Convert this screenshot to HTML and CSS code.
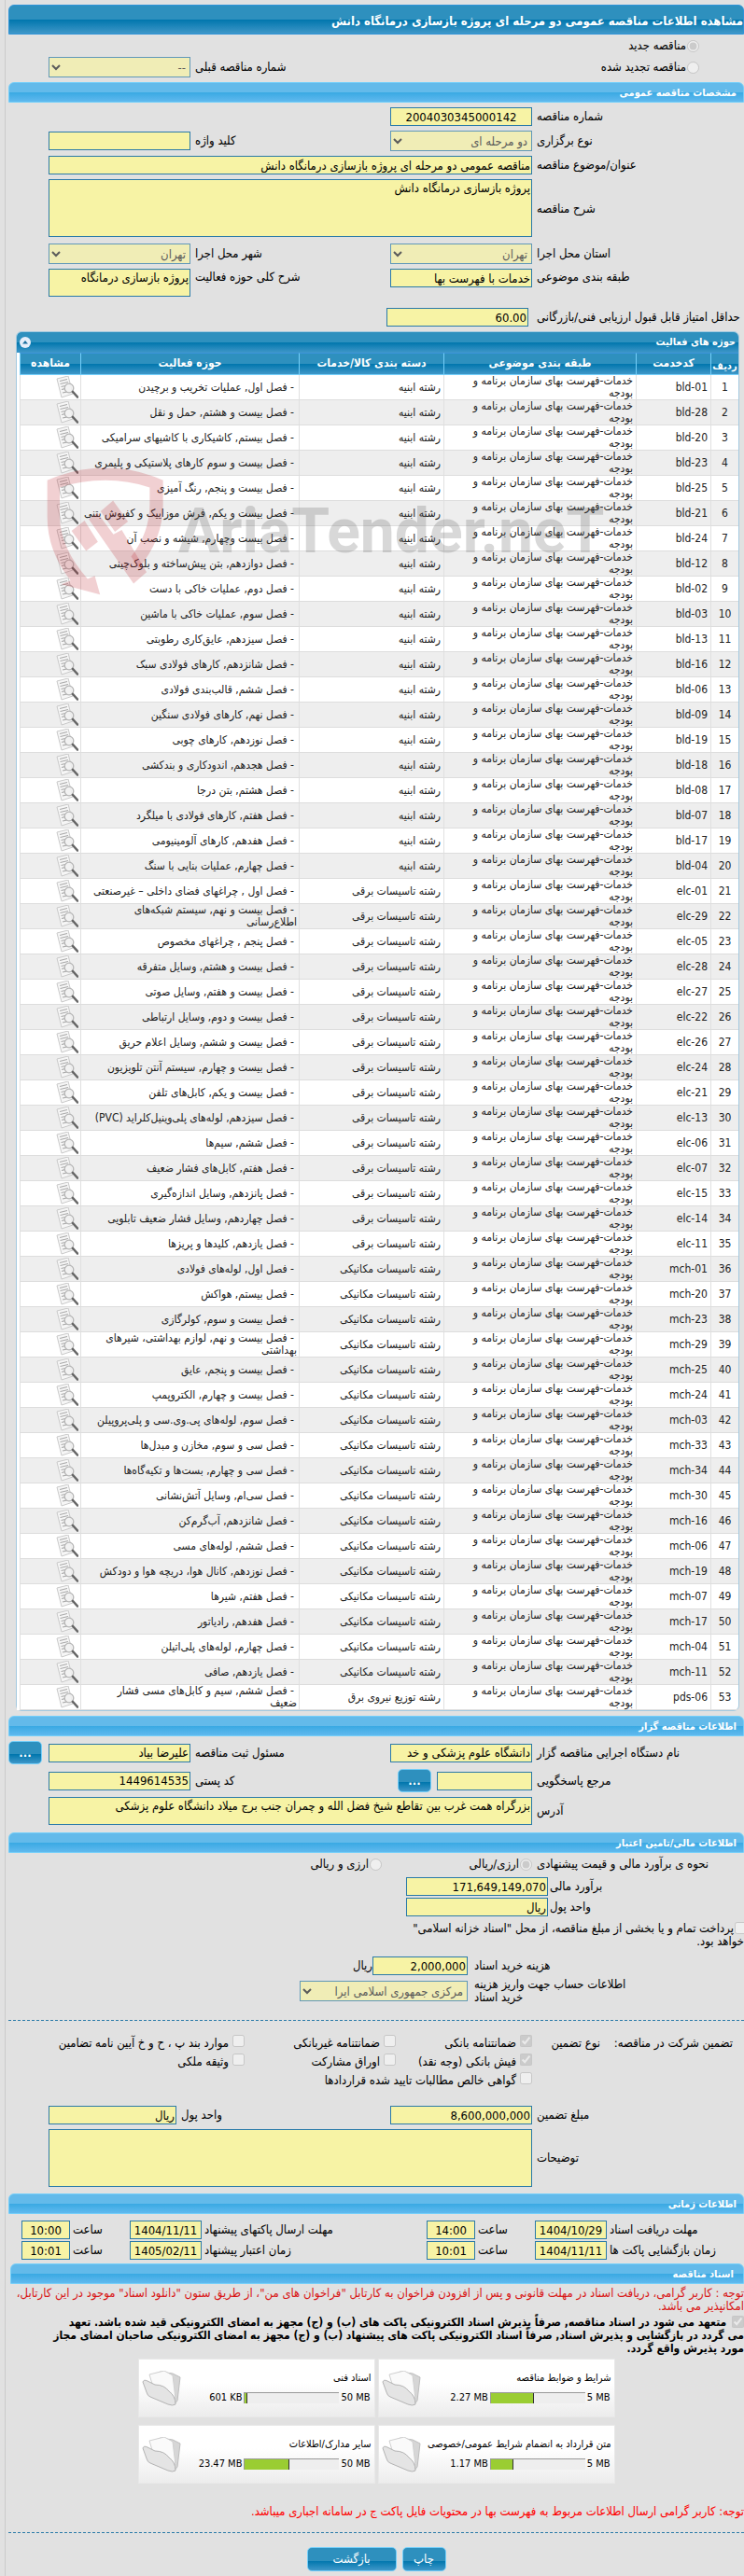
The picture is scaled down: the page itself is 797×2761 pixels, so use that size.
FILE: index.html
```
<!DOCTYPE html>
<html lang="fa" dir="rtl">
<head>
  <meta charset="UTF-8">
  <meta name="viewport" content="width=device-width, initial-scale=1">
  <title>مشاهده اطلاعات مناقصه عمومی</title>
  <link rel="stylesheet" href="styles.css">
</head>
<body>

<svg width="0" height="0" class="sprite" aria-hidden="true">
  <symbol id="icon-view" viewBox="0 0 24 24">
    <path d="M1 3 L13 0 L18 19 L6 23 Z" fill="#f6f6f6" stroke="#c9c9c9" stroke-width="1"/>
    <path d="M4 5.500 L12 3.500 M4.500 8.500 L13 6.500 M5.500 11.500 L10 10.500 M6 14.500 L9.500 13.700 M7 18 L12 16.800" stroke="#a9a9a9" stroke-width="1.200" fill="none"/>
    <circle cx="14" cy="13" r="4.800" fill="#f1f1f1" fill-opacity=".85" stroke="#b5b5b5" stroke-width="1.300"/>
    <path d="M18 17 L23 22.500" stroke="#666" stroke-width="2.600" stroke-linecap="round"/>
  </symbol>
  <symbol id="icon-folder" viewBox="0 0 42 38">
    <path d="M10 5 L20 1 L33 3 L41 7 L38 32 L34 37 Z" fill="#d6d6d6" stroke="#bdbdbd"/>
    <path d="M8 4 L24 0 L33 5 L36 30 L14 24 Z" fill="#fafafa" stroke="#cfcfcf"/>
    <path d="M1 12 Q2 9 6 11 L14 15 Q24 15 29 22 Q36 27 36 36 Q33 38 28 36 L9 28 Q6 27 5 23 Z" fill="#e4e4e4" stroke="#b3b3b3"/>
  </symbol>
</svg>

<div class="page">
  <h1 class="title-bar">مشاهده اطلاعات مناقصه عمومی دو مرحله ای پروژه بازسازی درمانگاه دانش</h1>

  <div class="form form-type">
    <div class="wide radio-line">
      <input type="radio" id="newTender" name="tenderKind" checked disabled>
      <label for="newTender">مناقصه جدید</label>
    </div>
    <div class="radio-line span2">
      <input type="radio" id="renewTender" name="tenderKind" disabled>
      <label for="renewTender">مناقصه تجدید شده</label>
    </div>
    <label for="prevNo" class="lbl">شماره مناقصه قبلی</label>
    <select id="prevNo" disabled><option>--</option></select>
  </div>

  <h2 class="section-bar">مشخصات مناقصه عمومی</h2>
  <div class="form form-main">
    <label for="tenderNo" class="lbl first">شماره مناقصه</label>
    <input type="text" id="tenderNo" class="center" value="2004030345000142" readonly>

    <label for="holdType" class="lbl first">نوع برگزاری</label>
    <select id="holdType" disabled><option>دو مرحله ای</option></select>
    <label for="keyword" class="lbl">کلید واژه</label>
    <input type="text" id="keyword" readonly>

    <label for="subject" class="lbl first">عنوان/موضوع مناقصه</label>
    <input type="text" id="subject" class="span3" value="مناقصه عمومی دو مرحله ای پروژه بازسازی درمانگاه دانش" readonly>

    <label for="desc" class="lbl first">شرح مناقصه</label>
    <textarea id="desc" class="span3 tall" readonly>پروژه بازسازی درمانگاه دانش</textarea>

    <label for="province" class="lbl first">استان محل اجرا</label>
    <select id="province" disabled><option>تهران</option></select>
    <label for="city" class="lbl">شهر محل اجرا</label>
    <select id="city" disabled><option>تهران</option></select>

    <label for="category" class="lbl first top">طبقه بندی موضوعی</label>
    <input type="text" id="category" class="top" value="خدمات با فهرست بها" readonly>
    <label for="field" class="lbl top">شرح کلی حوزه فعالیت</label>
    <textarea id="field" class="short" readonly>پروژه بازسازی درمانگاه</textarea>
  </div>
  <div class="line score">
    <label for="minScore">حداقل امتیاز قابل قبول ارزیابی فنی/بازرگانی</label>
    <input type="text" id="minScore" class="w-field" value="60.00" readonly>
  </div>

  <div class="panel">
    <div class="panel-title">
      <span>حوزه های فعالیت</span>
      <button type="button" class="collapse" aria-label="بستن">
        <svg viewBox="0 0 12 12"><path d="M3 7.500 L6 4 L9 7.500 Z" fill="#1b6f9e"/></svg>
      </button>
    </div>
    <table class="grid">
      <colgroup>
        <col class="c-no"><col class="c-code"><col class="c-class"><col class="c-group"><col class="c-area"><col class="c-view">
      </colgroup>
      <thead>
        <tr>
          <th class="low">ردیف</th><th>کدخدمت</th><th>طبقه بندی موضوعی</th><th>دسته بندی کالا/خدمات</th><th>حوزه فعالیت</th><th>مشاهده</th>
        </tr>
      </thead>
      <tbody id="rows"></tbody>
    </table>
    <div class="watermark" aria-hidden="true">
      <span>AriaTender.neT</span>
      <svg viewBox="25 25 385 420">
        <path d="M30 72 Q120 32 217 32 Q315 32 403 72 V150 Q403 260 325 355 L300 318 Q360 240 360 150 V95 Q290 72 217 72 Q140 72 70 95 V190 Q72 290 160 390 L183 380 L200 440 L75 407 L105 395 Q30 300 30 190 Z"/>
        <path d="M108 235 L150 202 L193 270 L155 300 Z M202 172 L242 137 L290 205 L248 238 Z M163 197 L192 177 L243 246 L270 232 L350 368 L308 405 Z"/>
      </svg>
    </div>
  </div>

  <h2 class="section-bar">اطلاعات مناقصه گزار</h2>
  <div class="form form-owner">
    <label for="org" class="lbl first">نام دستگاه اجرایی مناقصه گزار</label>
    <input type="text" id="org" value="دانشگاه علوم پزشکی و خد" readonly>
    <label for="registrar" class="lbl">مسئول ثبت مناقصه</label>
    <input type="text" id="registrar" value="علیرضا بیاد" readonly>
    <button type="button" class="btn dots">...</button>

    <label for="contact" class="lbl first">مرجع پاسخگویی</label>
    <div class="with-btn">
      <input type="text" id="contact" readonly>
      <button type="button" class="btn dots">...</button>
    </div>
    <label for="postal" class="lbl">کد پستی</label>
    <input type="text" id="postal" value="1449614535" readonly>

    <label for="address" class="lbl first">آدرس</label>
    <textarea id="address" class="span3 short" readonly>بزرگراه همت غرب بین تقاطع شیخ فضل الله و چمران جنب برج میلاد دانشگاه علوم پزشکی</textarea>
  </div>

  <h2 class="section-bar">اطلاعات مالی/تامین اعتبار</h2>
  <div class="line estimate-kind">
    <span class="kind-label">نحوه ی برآورد مالی و قیمت پیشنهادی</span>
    <span class="radio-line first-kind">
      <input type="radio" id="rial" name="currencyKind" checked disabled>
      <label for="rial">ارزی/ریالی</label>
    </span>
    <span class="radio-line">
      <input type="radio" id="both" name="currencyKind" disabled>
      <label for="both">ارزی و ریالی</label>
    </span>
  </div>
  <div class="line estimate">
    <label for="estimate">برآورد مالی</label>
    <input type="text" id="estimate" class="w-field" value="171,649,149,070" readonly>
  </div>
  <div class="line estimate">
    <label for="unit">واحد پول</label>
    <input type="text" id="unit" class="w-field" value="ریال" readonly>
  </div>
  <div class="treasury">
    <input type="checkbox" id="treasury" disabled><label for="treasury">پرداخت تمام و یا بخشی از مبلغ مناقصه، از محل "اسناد خزانه اسلامی" خواهد بود.</label>
  </div>
  <div class="line cost">
    <label for="cost">هزینه خرید اسناد</label>
    <input type="text" id="cost" value="2,000,000" readonly>
    <span>ریال</span>
  </div>
  <div class="line cost account">
    <label for="account">اطلاعات حساب جهت واریز هزینه خرید اسناد</label>
    <select id="account" disabled><option>مرکزی جمهوری اسلامی ایرا</option></select>
  </div>

  <hr>
  <div class="guarantee">
    <span>تضمین شرکت در مناقصه:</span>
    <span>نوع تضمین</span>
    <div class="options">
      <label><input type="checkbox" checked disabled>ضمانتنامه بانکی</label>
      <label><input type="checkbox" disabled>ضمانتنامه غیربانکی</label>
      <label><input type="checkbox" disabled>موارد بند پ ، ح و خ آیین نامه تضامین</label>
      <label><input type="checkbox" checked disabled>فیش بانکی (وجه نقد)</label>
      <label><input type="checkbox" disabled>اوراق مشارکت</label>
      <label><input type="checkbox" disabled>وثیقه ملکی</label>
      <label class="all"><input type="checkbox" disabled>گواهی خالص مطالبات تایید شده قراردادها</label>
    </div>
  </div>
  <div class="form form-amount">
    <label for="amount" class="lbl first">مبلغ تضمین</label>
    <input type="text" id="amount" value="8,600,000,000" readonly>
    <label for="unit2" class="lbl">واحد پول</label>
    <input type="text" id="unit2" value="ریال" readonly>
    <label for="notes" class="lbl first">توضیحات</label>
    <textarea id="notes" class="span3 tall" readonly></textarea>
  </div>

  <h2 class="section-bar">اطلاعات زمانی</h2>
  <div class="times">
    <label for="d1">مهلت دریافت اسناد</label>
    <input type="text" id="d1" value="1404/10/29" readonly>
    <label for="t1">ساعت</label>
    <input type="text" id="t1" value="14:00" readonly>
    <label for="d2">مهلت ارسال پاکتهای پیشنهاد</label>
    <input type="text" id="d2" value="1404/11/11" readonly>
    <label for="t2">ساعت</label>
    <input type="text" id="t2" value="10:00" readonly>
    <label for="d3" class="first">زمان بازگشایی پاکت ها</label>
    <input type="text" id="d3" value="1404/11/11" readonly>
    <label for="t3">ساعت</label>
    <input type="text" id="t3" value="10:01" readonly>
    <label for="d4">زمان اعتبار پیشنهاد</label>
    <input type="text" id="d4" value="1405/02/11" readonly>
    <label for="t4">ساعت</label>
    <input type="text" id="t4" value="10:01" readonly>
  </div>

  <h2 class="section-bar docs-bar">اسناد مناقصه</h2>
  <p class="notice">توجه : کاربر گرامی، دریافت اسناد در مهلت قانونی و پس از افزودن فراخوان به کارتابل "فراخوان های من"، از طریق ستون "دانلود اسناد" موجود در این کارتابل، امکانپذیر می باشد.</p>
  <div class="commit">
    <input type="checkbox" id="commit" checked disabled>
    <label for="commit">متعهد می شود در اسناد مناقصه, صرفاً پذیرش اسناد الکترونیکی پاکت های (ب) و (ج) مجهز به امضای الکترونیکی قید شده باشد. تعهد<br>می گردد در بازگشایی و پذیرش اسناد, صرفاً اسناد الکترونیکی پاکت های پیشنهاد (ب) و (ج) مجهز به امضای الکترونیکی صاحبان امضای مجاز<br>مورد پذیرش واقع گردد.</label>
  </div>

  <div class="docs">
    <div class="doc">
      <div class="doc-info">
        <div class="doc-name">شرایط و ضوابط مناقصه</div>
        <div class="usage"><span>2.27 MB</span><div class="bar"><div style="width:46%"></div></div><span>5 MB</span></div>
      </div>
      <svg class="folder"><use href="#icon-folder"/></svg>
    </div>
    <div class="doc">
      <div class="doc-info">
        <div class="doc-name">اسناد فنی</div>
        <div class="usage"><span>601 KB</span><div class="bar"><div style="width:3%"></div></div><span>50 MB</span></div>
      </div>
      <svg class="folder"><use href="#icon-folder"/></svg>
    </div>
    <div class="doc">
      <div class="doc-info">
        <div class="doc-name">متن قرارداد به انضمام شرایط عمومی/خصوصی</div>
        <div class="usage"><span>1.17 MB</span><div class="bar"><div style="width:24%"></div></div><span>5 MB</span></div>
      </div>
      <svg class="folder"><use href="#icon-folder"/></svg>
    </div>
    <div class="doc">
      <div class="doc-info">
        <div class="doc-name">سایر مدارک/اطلاعات</div>
        <div class="usage"><span>23.47 MB</span><div class="bar"><div style="width:47%"></div></div><span>50 MB</span></div>
      </div>
      <svg class="folder"><use href="#icon-folder"/></svg>
    </div>
  </div>

  <p class="notice last">توجه: کاربر گرامی ارسال اطلاعات مربوط به فهرست بها در محتویات فایل پاکت ج در سامانه اجباری میباشد.</p>
  <hr>
  <div class="actions">
    <button type="button" class="btn print">چاپ</button>
    <button type="button" class="btn back">بازگشت</button>
  </div>
</div>

<script src="script.js"></script>
</body>
</html>
```

FILE: styles.css
```
* {
  box-sizing: border-box;
}

body {
  margin: 0;
  background: #e1e1e1;
  color: #000;
  font: 13px/14px "DejaVu Sans Condensed", "DejaVu Sans", sans-serif;
}

.sprite {
  position: absolute;
}

.page {
  margin-left: 5px;
  border-left: 1px solid #cacaca;
  padding: 5px 0 5px 3px;
  overflow: hidden;
}

/* bars */
.title-bar {
  margin: 0;
  height: 32px;
  border: 1px solid #2f93d8;
  border-radius: 6px 6px 0 0;
  background: linear-gradient(#2e90be 50%, #0076ad 50%, #3f97c8);
  color: #fff;
  font-size: 13px;
  line-height: 33px;
}

.section-bar {
  margin: 0;
  height: 22px;
  padding-right: 7px;
  border: 1px solid #74cffa;
  border-radius: 6px 6px 0 0;
  background: linear-gradient(#63baea 50%, #39a9e3 50%, #60b9ee);
  color: #fff;
  font-size: 11px;
  line-height: 21px;
}

/* fields */
input[type="text"],
textarea,
select {
  display: block;
  margin: 0;
  padding: 0 1px;
  border: 1px solid #2a7aa8;
  border-radius: 0;
  background: #f7f3a5;
  color: #000;
  font: inherit;
  outline: none;
}

input[type="text"] {
  height: 20px;
  width: 100%;
}

select {
  height: 22px;
  width: 100%;
  padding: 0;
}

select:disabled {
  color: #222;
  opacity: .7;
}

textarea {
  width: 100%;
  padding: 2px 1px;
  resize: none;
  overflow: hidden;
}

.tall {
  height: 62px;
}

.short {
  height: 30px;
}

input.center {
  text-align: center;
}

input[type="radio"],
input[type="checkbox"] {
  width: 13px;
  height: 13px;
  margin: 0;
  flex: none;
}

.form {
  display: grid;
  grid-template-columns: 227px 152px 1fr 152px 43px;
  row-gap: 5px;
  align-items: center;
}

.lbl {
  padding-left: 5px;
  text-align: left;
}

.first {
  grid-column: 1;
}

.span2 {
  grid-column: span 2;
}

.span3 {
  grid-column: 2 / span 3;
}

.wide {
  grid-column: 1 / -1;
}

.top {
  align-self: start;
}

.lbl.top {
  line-height: 18px;
}

.radio-line {
  display: flex;
  align-items: center;
  gap: 1px;
}

.form-type {
  padding: 4px 0 5px;
  row-gap: 4px;
}

.form-type .radio-line {
  padding-right: 48px;
}

.form-type .wide {
  height: 16px;
}

.form-main {
  padding-top: 5px;
}

#desc {
  margin-bottom: 2px;
}

.line {
  display: flex;
  align-items: center;
}

input.w-field {
  width: 152px;
}

.score {
  padding: 12px 0 5px;
}

.score label {
  width: 231px;
  padding-left: 9px;
  text-align: left;
  white-space: nowrap;
}

/* activity table */
.panel {
  position: relative;
  margin: 0 5px 5px 8px;
  border: 1px solid #a3c9df;
  border-radius: 6px;
  background: #fff;
}

.panel-title {
  display: flex;
  justify-content: space-between;
  align-items: center;
  height: 22px;
  padding: 0 3px;
  border-radius: 5px 5px 0 0;
  background: linear-gradient(#2e90be 50%, #0076ad 50%, #3f97c8);
  color: #fff;
  font-size: 11px;
  font-weight: bold;
}

.collapse {
  width: 12px;
  height: 12px;
  padding: 0;
  border: 0;
  border-radius: 50%;
  background: #e6eefa;
}

.collapse svg {
  display: block;
}

.grid {
  width: 100%;
  border-collapse: separate;
  border-spacing: 0;
  table-layout: fixed;
  border-left: 3px solid #fff;
  color: #222;
  font-size: 12px;
  line-height: 13px;
}

.c-no { width: 30px; }
.c-code { width: 80px; }
.c-class { width: 206px; }
.c-group { width: 155px; }
.c-view { width: 65px; }

.grid th {
  height: 24px;
  padding: 0 0 2px;
  border-left: 1px solid #74cffa;
  border-bottom: 1px solid #74cffa;
  border-top: 1px solid #3b94d9;
  background: linear-gradient(#2e90be 50%, #0076ad 50%, #3f97c8);
  color: #fff;
  white-space: nowrap;
}

.grid th.low {
  padding: 4px 0 0;
  font-size: 11px;
}

.grid td {
  height: 27px;
  padding: 0 3px;
  border-left: 1px solid #e0e0e0;
  border-bottom: 1px solid #ddd;
  text-align: right;
}

.grid tbody tr:nth-child(even) {
  background: #eee;
}

.grid td:first-child {
  padding: 0;
  text-align: center;
}

.grid td.area {
  padding: 0 2px;
  text-indent: 3px;
}

.grid td.view {
  padding: 0 2px;
}

.view button {
  display: block;
  width: 24px;
  height: 24px;
  padding: 0;
  border: 0;
  background: none;
}

.view svg {
  display: block;
  width: 24px;
  height: 24px;
}

.watermark {
  position: absolute;
  top: 143px;
  left: 31px;
  display: flex;
  align-items: center;
  gap: 14px;
  color: rgba(90, 90, 90, .24);
  font: bold 66px "Roboto", sans-serif;
  pointer-events: none;
}

.watermark svg {
  width: 128px;
  height: 140px;
  fill: rgba(190, 40, 50, .22);
}

/* buttons */
.btn {
  padding: 0;
  border: 1px solid #74cffa;
  border-radius: 5px;
  background: linear-gradient(#2e90be 58%, #0076ad 58%, #3f97c8);
  color: #fff;
  font: inherit;
}

.dots {
  width: 36px;
  height: 25px;
  font-weight: bold;
}

.form-owner {
  padding: 5px 0 8px;
}

.form-owner > .dots {
  justify-self: end;
}

.with-btn {
  display: flex;
  align-items: center;
  gap: 6px;
}

.with-btn input[type="text"] {
  width: 102px;
}

/* finance */
.estimate-kind {
  height: 24px;
}

.kind-label {
  width: 222px;
  margin-left: 5px;
  text-align: left;
}

.first-kind {
  width: 161px;
}

.estimate {
  padding: 2px 0 0;
}

.estimate + .estimate {
  margin-bottom: 6px;
}

.estimate label {
  width: 210px;
  padding-left: 2px;
  text-align: left;
}

.treasury {
  width: 364px;
  margin-bottom: 9px;
}

.treasury input {
  margin: -2px -3px 0 1px;
  vertical-align: middle;
}

.cost label {
  width: 296px;
  padding-left: 7px;
  text-align: left;
}

.cost input[type="text"] {
  width: 102px;
}

.account {
  padding: 3px 0 17px;
}

.account label {
  padding-right: 118px;
}

.account select {
  width: 180px;
}

hr {
  margin: 0;
  border: 0;
  border-top: 1px dashed #2a7aa8;
}

.guarantee {
  display: flex;
  padding: 15px 12px 16px 0;
}

.guarantee > span:first-child {
  width: 142px;
  padding-top: 2px;
}

.guarantee > span:nth-child(2) {
  width: 73px;
  padding-top: 2px;
}

.options {
  display: grid;
  grid-template-columns: 146px 162px 1fr;
  grid-auto-rows: 20px;
  flex: 1;
}

.options label {
  display: flex;
  align-items: start;
  gap: 4px;
  line-height: 18px;
  white-space: nowrap;
}

.options .all {
  grid-column: 1 / -1;
}

.form-amount {
  grid-template-columns: 227px 152px 1fr 137px 43px;
  padding-bottom: 7px;
}

/* times */
.times {
  display: grid;
  grid-template-columns: 147px 77px 64px 52px 1fr 77px 64px 52px 14px;
  row-gap: 2px;
  align-items: center;
  padding: 7px 0 4px;
}

.times label {
  padding-left: 3px;
  text-align: left;
}

.times input[type="text"] {
  text-align: center;
}

/* documents */
.docs-bar {
  margin-left: 2px;
  padding-right: 10px;
}

.notice {
  margin: 3px 0;
  color: #d91414;
}

.commit {
  margin-bottom: 4px;
  font-size: 12px;
  font-weight: bold;
}

.commit input {
  margin: -2px 0 0 2px;
  vertical-align: middle;
}

.docs {
  display: grid;
  grid-template-columns: 254px 254px;
  gap: 8px 3px;
  justify-content: center;
}

.doc {
  display: flex;
  align-items: center;
  height: 63px;
  padding: 0 3px;
  border: 1px solid #e8e8e8;
  background: linear-gradient(#fff 40%, #ececec);
  font-size: 11px;
}

.doc-info {
  flex: 1;
}

.doc-name {
  margin-bottom: 7px;
}

.usage {
  display: flex;
  direction: ltr;
  align-items: center;
  justify-content: flex-end;
  gap: 2px;
  padding-right: 1px;
}

.bar {
  width: 102px;
  height: 12px;
  border-top: 1px solid #999;
  border-left: 1px solid #999;
  background: #eee;
}

.bar div {
  height: 100%;
  border-right: 1px solid #333;
  background: #9acd32;
}

.folder {
  width: 42px;
  height: 38px;
}

.notice.last {
  margin: 23px 0 15px;
  color: #f00;
}

.actions {
  display: flex;
  justify-content: center;
  gap: 6px;
  padding-top: 15px;
}

.actions .btn {
  height: 26px;
}

.print {
  width: 47px;
}

.back {
  width: 96px;
}
```

FILE: script.js
```
const bld = "رشته ابنیه";
const elc = "رشته تاسیسات برقی";
const mch = "رشته تاسیسات مکانیکی";
const pds = "رشته توزیع نیروی برق";

const items = [
  ["bld-01", bld, "فصل اول, عملیات تخریب و برچیدن"],
  ["bld-28", bld, "فصل بیست و هشتم, حمل و نقل"],
  ["bld-20", bld, "فصل بیستم, کاشیکاری با کاشیهای سرامیکی"],
  ["bld-23", bld, "فصل بیست و سوم کارهای پلاستیکی و پلیمری"],
  ["bld-25", bld, "فصل بیست و پنجم, رنگ آمیزی"],
  ["bld-21", bld, "فصل بیست و یکم, فرش موزاییک و کفپوش بتنی"],
  ["bld-24", bld, "فصل بیست وچهارم, شیشه و نصب آن"],
  ["bld-12", bld, "فصل دوازدهم, بتن پیش‌ساخته و بلوک‌چینی"],
  ["bld-02", bld, "فصل دوم, عملیات خاکی با دست"],
  ["bld-03", bld, "فصل سوم, عملیات خاکی با ماشین"],
  ["bld-13", bld, "فصل سیزدهم, عایق‌کاری رطوبتی"],
  ["bld-16", bld, "فصل شانزدهم, کارهای فولادی سبک"],
  ["bld-06", bld, "فصل ششم, قالب‌بندی فولادی"],
  ["bld-09", bld, "فصل نهم, کارهای فولادی سنگین"],
  ["bld-19", bld, "فصل نوزدهم, کارهای چوبی"],
  ["bld-18", bld, "فصل هجدهم, اندودکاری و بندکشی"],
  ["bld-08", bld, "فصل هشتم, بتن درجا"],
  ["bld-07", bld, "فصل هفتم, کارهای فولادی با میلگرد"],
  ["bld-17", bld, "فصل هفدهم, کارهای آلومینیومی"],
  ["bld-04", bld, "فصل چهارم, عملیات بنایی با سنگ"],
  ["elc-01", elc, "فصل اول , چراغهای فضای داخلی – غیرصنعتی"],
  ["elc-29", elc, "فصل بیست و نهم, سیستم شبکه‌های اطلاع‌رسانی"],
  ["elc-05", elc, "فصل پنجم , چراغهای مخصوص"],
  ["elc-28", elc, "فصل بیست و هشتم, وسایل متفرقه"],
  ["elc-27", elc, "فصل بیست و هفتم, وسایل صوتی"],
  ["elc-22", elc, "فصل بیست و دوم, وسایل ارتباطی"],
  ["elc-26", elc, "فصل بیست و ششم, وسایل اعلام حریق"],
  ["elc-24", elc, "فصل بیست و چهارم, سیستم آنتن تلویزیون"],
  ["elc-21", elc, "فصل بیست و یکم, کابل‌های تلفن"],
  ["elc-13", elc, "فصل سیزدهم, لوله‌های پلی‌وینیل‌کلراید (PVC)"],
  ["elc-06", elc, "فصل ششم, سیم‌ها"],
  ["elc-07", elc, "فصل هفتم, کابل‌های فشار ضعیف"],
  ["elc-15", elc, "فصل پانزدهم, وسایل اندازه‌گیری"],
  ["elc-14", elc, "فصل چهاردهم, وسایل فشار ضعیف تابلویی"],
  ["elc-11", elc, "فصل یازدهم, کلیدها و پریزها"],
  ["mch-01", mch, "فصل اول, لوله‌های فولادی"],
  ["mch-20", mch, "فصل بیستم, هواکش"],
  ["mch-23", mch, "فصل بیست و سوم, کولرگازی"],
  ["mch-29", mch, "فصل بیست و نهم, لوازم بهداشتی، شیرهای بهداشتی"],
  ["mch-25", mch, "فصل بیست و پنجم, عایق"],
  ["mch-24", mch, "فصل بیست و چهارم, الکتروپمپ"],
  ["mch-03", mch, "فصل سوم, لوله‌های پی.وی.سی و پلی‌پروپیلن"],
  ["mch-33", mch, "فصل سی و سوم, مخازن و مبدل‌ها"],
  ["mch-34", mch, "فصل سی و چهارم, بست‌ها و تکیه‌گاه‌ها"],
  ["mch-30", mch, "فصل سی‌ام, وسایل آتش‌نشانی"],
  ["mch-16", mch, "فصل شانزدهم, آب‌گرم‌کن"],
  ["mch-06", mch, "فصل ششم, لوله‌های مسی"],
  ["mch-19", mch, "فصل نوزدهم, کانال هوا، دریچه هوا و دودکش"],
  ["mch-07", mch, "فصل هفتم, شیرها"],
  ["mch-17", mch, "فصل هفدهم, رادیاتور"],
  ["mch-04", mch, "فصل چهارم, لوله‌های پلی‌اتیلن"],
  ["mch-11", mch, "فصل یازدهم, صافی"],
  ["pds-06", pds, "فصل ششم, سیم و کابل‌های مسی فشار<br>ضعیف"]
];

document.getElementById("rows").innerHTML = items.map(([code, group, area], i) => `
  <tr>
    <td>${i + 1}</td>
    <td><bdi>${code}</bdi></td>
    <td>خدمات-فهرست بهای سازمان برنامه و بودجه</td>
    <td>${group}</td>
    <td class="area">- ${area}</td>
    <td class="view"><button type="button" aria-label="مشاهده"><svg><use href="#icon-view"/></svg></button></td>
  </tr>`).join("");
```
